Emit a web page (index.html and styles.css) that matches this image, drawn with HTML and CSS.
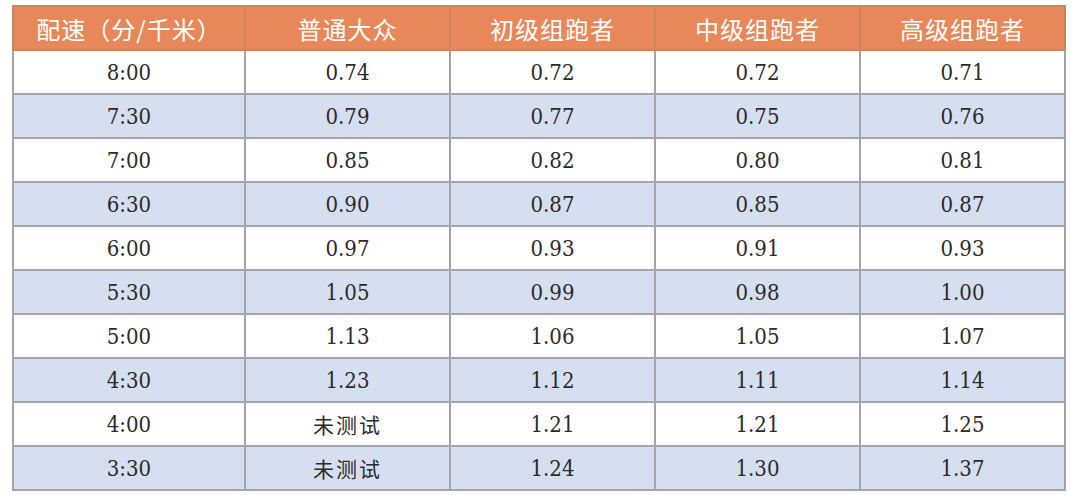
FILE: index.html
```html
<!DOCTYPE html>
<html>
<head>
<meta charset="utf-8">
<link rel="stylesheet" href="styles.css">
</head>
<body>
<table class="pace">
<colgroup><col class="c1"><col class="cn"><col class="cn"><col class="cn"><col class="cn"></colgroup>
<thead>
<tr><th>配速（分/千米）</th><th>普通大众</th><th>初级组跑者</th><th>中级组跑者</th><th>高级组跑者</th></tr>
</thead>
<tbody>
<tr><td>8:00</td><td>0.74</td><td>0.72</td><td>0.72</td><td>0.71</td></tr>
<tr class="alt"><td>7:30</td><td>0.79</td><td>0.77</td><td>0.75</td><td>0.76</td></tr>
<tr><td>7:00</td><td>0.85</td><td>0.82</td><td>0.80</td><td>0.81</td></tr>
<tr class="alt"><td>6:30</td><td>0.90</td><td>0.87</td><td>0.85</td><td>0.87</td></tr>
<tr><td>6:00</td><td>0.97</td><td>0.93</td><td>0.91</td><td>0.93</td></tr>
<tr class="alt"><td>5:30</td><td>1.05</td><td>0.99</td><td>0.98</td><td>1.00</td></tr>
<tr><td>5:00</td><td>1.13</td><td>1.06</td><td>1.05</td><td>1.07</td></tr>
<tr class="alt"><td>4:30</td><td>1.23</td><td>1.12</td><td>1.11</td><td>1.14</td></tr>
<tr><td>4:00</td><td class="cjk">未测试</td><td>1.21</td><td>1.21</td><td>1.25</td></tr>
<tr class="alt"><td>3:30</td><td class="cjk">未测试</td><td>1.24</td><td>1.30</td><td>1.37</td></tr>
</tbody>
</table>
</body>
</html>
```
FILE: styles.css
```css
html, body {
  margin: 0;
  padding: 0;
  background: #ffffff;
}
body {
  padding: 5px 0 0 12px;
}
.pace {
  border-collapse: collapse;
  table-layout: fixed;
  width: 1054px;
}
.c1 { width: 232px; }
.cn { width: 205px; }
.pace th,
.pace td {
  border: 2px solid #a4a4ac;
  text-align: center;
  vertical-align: middle;
  padding: 0;
}
.pace th {
  height: 42px;
  background: #e8885a;
  color: #ffffff;
  font-family: "Noto Sans CJK SC", sans-serif;
  font-weight: 400;
  font-size: 24px;
  letter-spacing: 1px;
  border-color: #c9865f;
}
.pace td {
  height: 42px;
  background: #ffffff;
  color: #2b2b2b;
  font-family: "DejaVu Serif", serif;
  font-stretch: condensed;
  font-size: 22px;
}
.pace tr.alt td {
  background: #d6dff0;
}
.pace td.cjk {
  font-family: "Noto Sans CJK SC", sans-serif;
  font-stretch: normal;
  font-weight: 400;
  font-size: 21px;
  letter-spacing: 2px;
}
```
